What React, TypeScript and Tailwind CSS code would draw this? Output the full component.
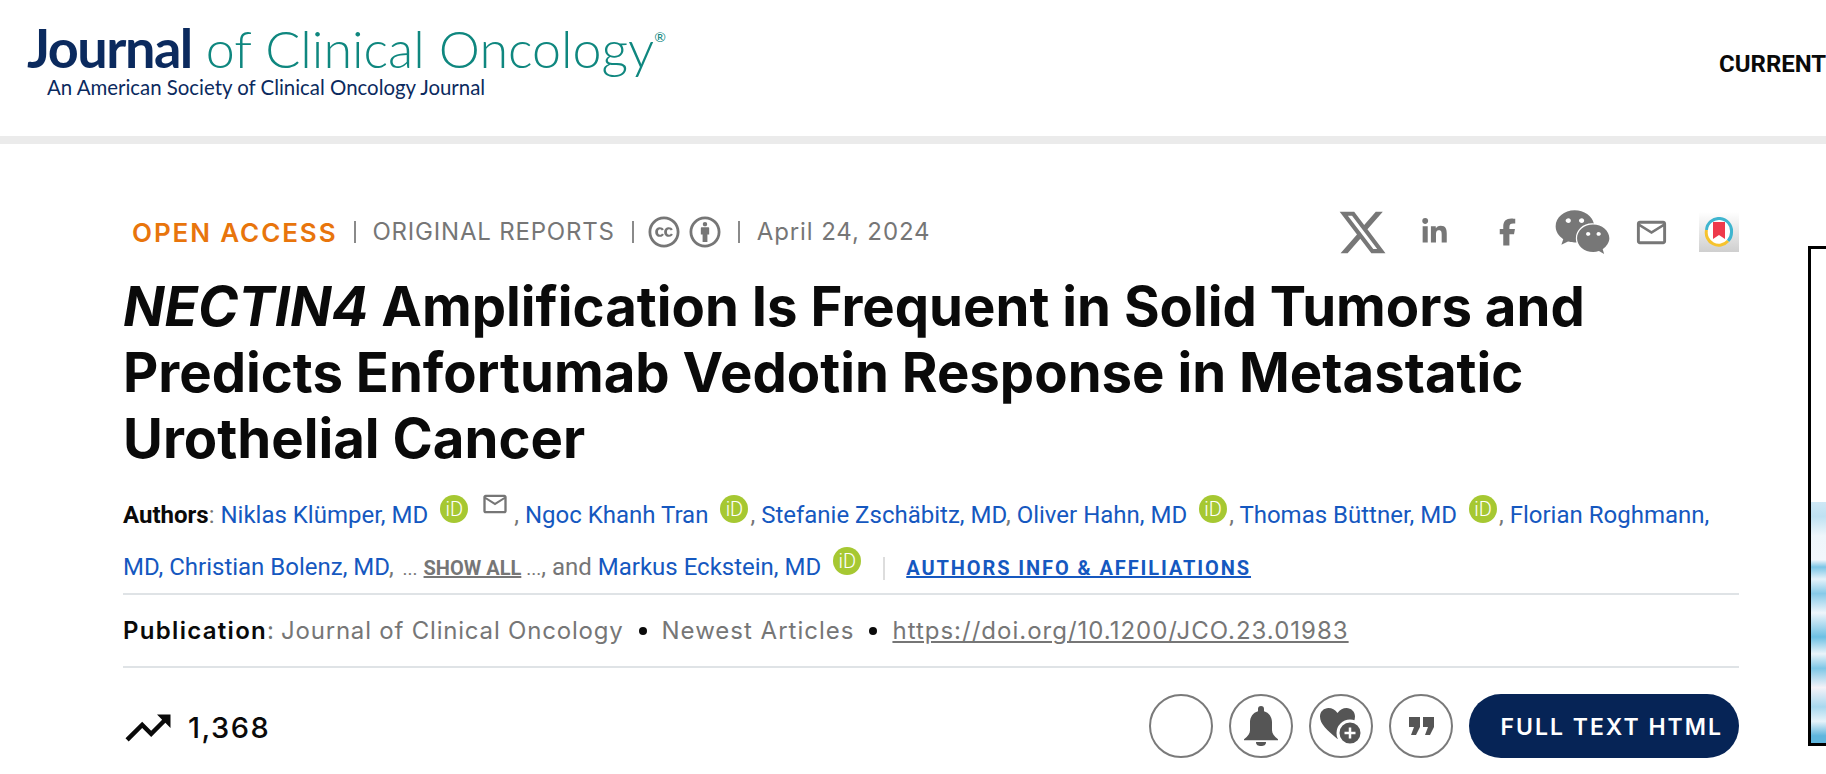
import React from 'react';
import { FaXTwitter, FaLinkedinIn, FaFacebookF, FaWeixin, FaCreativeCommons, FaCreativeCommonsBy } from 'react-icons/fa6';
import { MdTrendingUp, MdOutlineEmail } from 'react-icons/md';

const OrcidBadge = () => (
  <span className="inline-flex w-[28px] h-[28px] ml-[12px] mr-[2px] rounded-full bg-[#a6c832] text-white items-center justify-center align-[7px] text-[20px] font-light leading-none">
    iD
  </span>
);

const Sep = () => <span className="block w-[2px] h-[22px] bg-[#8a8a8a]" />;

const AuthorLink = ({ children }: { children: React.ReactNode }) => (
  <a className="text-[#1558c0]">{children}</a>
);

const Bullet = () => <span className="block w-[8px] h-[8px] mx-[15px] rounded-full bg-[#0a0a0a]" />;

const BookmarkTile = () => (
  <div className="w-[40px] h-[40px] bg-gradient-to-b from-white to-[#cfcfcf] flex items-center justify-center">
    <svg width="30" height="30" viewBox="0 0 30 30">
      <circle cx="15" cy="15" r="12.500" fill="#ffffff" />
      <path d="M2.500 13A12.500 12.500 0 0 1 27.500 15 12.500 12.500 0 0 1 24 24" fill="none" stroke="#3fb5cf" strokeWidth="3" />
      <path d="M2.500 13A12.500 12.500 0 0 0 24 24" fill="none" stroke="#f6c32e" strokeWidth="3" />
      <path d="M9 5h12v17l-6-4-6 4z" fill="#ee3a4c" />
    </svg>
  </div>
);

const CircleButton = ({ children }: { children?: React.ReactNode }) => (
  <button className="w-[64px] h-[64px] rounded-full border-2 border-[#7a7a7a] flex items-center justify-center text-[#555555]">
    {children}
  </button>
);

const BellIcon = () => (
  <svg width="34" height="40" viewBox="0 0 34 40" fill="#555555">
    <path d="M17 0a3 3 0 0 1 3 3v2.200c5 1.300 8 6 8 11v8c0 3 2 6 6 9v1H0v-1c4-3 6-6 6-9v-8c0-5 3-9.700 8-11V3a3 3 0 0 1 3-3z" />
    <path d="M12 36h10c0 3-2 4-5 4s-5-1-5-4z" />
  </svg>
);

const HeartPlus = () => (
  <svg width="60" height="60" viewBox="0 0 60 60">
    <path d="M26.500 43C16 34 9 28 9 20.500 9 15.500 13 12 17.500 12c3.500 0 6.500 1.500 9 5 2.500-3.500 5.500-5 9-5 4.500 0 8.500 3.500 8.500 8.500 0 7.500-7 13.500-17.500 22.500z" fill="#555555" />
    <circle cx="39" cy="37" r="12" fill="#555555" stroke="#ffffff" strokeWidth="3" />
    <path d="M39 31.500v11M33.500 37h11" stroke="#ffffff" strokeWidth="2.500" />
  </svg>
);

const QuoteIcon = () => (
  <svg width="25" height="18" viewBox="0 0 25 18" fill="#555555">
    <path d="M0 0h11v10l-4 8H2l3-8H0z" />
    <path d="M14 0h11v10l-4 8h-5l3-8h-5z" />
  </svg>
);

export default function App() {
  return (
    <div className="w-[1826px] h-[774px] overflow-hidden bg-white font-['Inter',sans-serif]">
      <header className="h-[144px] border-b-[8px] border-[#ebebeb] flex">
        <div className="pl-[27px] pt-[18px]">
          <div className="font-['Lato',sans-serif] text-[54px] leading-[60px] whitespace-nowrap">
            <span className="font-bold text-[#0b2a5e] tracking-[-1.5px]">Journal</span>
            <span className="font-light text-[52px] text-[#0f877f] ml-[14px]">of Clinical Oncology</span>
            <sup className="text-[14px] text-[#0f877f] top-[-26px]">®</sup>
          </div>
          <div className="font-['Lato',sans-serif] text-[20.400px] leading-[24px] text-[#0b2a5e] ml-[20px] -mt-[3px] whitespace-nowrap">
            An American Society of Clinical Oncology Journal
          </div>
        </div>
        <nav className="ml-auto w-[107px] overflow-hidden pt-[49px]">
          <span className="font-['Roboto',sans-serif] font-bold text-[24px] leading-[30px] text-[#0a0a0a] whitespace-nowrap">
            CURRENT
          </span>
        </nav>
      </header>

      <div className="flex pl-[123px]">
        <main className="w-[1616px] shrink-0 pt-[66px]">
          <div className="flex items-center justify-between h-[44px] pl-[9px]">
            <div className="flex items-center text-[24px] tracking-[0.800px] text-[#767676]">
              <span className="font-semibold text-[26px] tracking-[1.900px] text-[#e8750c]">OPEN ACCESS</span>
              <span className="ml-[17px]"><Sep /></span>
              <span className="ml-[16px]">ORIGINAL REPORTS</span>
              <span className="ml-[17px]"><Sep /></span>
              <FaCreativeCommons className="ml-[14px] w-[32px] h-[32px]" />
              <FaCreativeCommonsBy className="ml-[9px] w-[32px] h-[32px]" />
              <span className="ml-[17px]"><Sep /></span>
              <span className="ml-[17px] tracking-[0.900px]">April 24, 2024</span>
            </div>
            <div className="flex items-center text-[#777777]">
              <FaXTwitter className="w-[51px] h-[51px]" />
              <FaLinkedinIn className="ml-[33px] w-[27px] h-[28px]" />
              <FaFacebookF className="ml-[51px] w-[17px] h-[30px]" />
              <FaWeixin className="ml-[38px] w-[57px] h-[50px]" />
              <MdOutlineEmail className="ml-[23px] w-[35px] h-[35px]" />
              <div className="ml-[30px]"><BookmarkTile /></div>
            </div>
          </div>

          <h1 className="mt-[19px] text-[54.500px] leading-[66px] font-bold text-[#0a0a0a] whitespace-nowrap">
            <em>NECTIN4</em> Amplification Is Frequent in Solid Tumors and
            <br />
            Predicts Enfortumab Vedotin Response in Metastatic
            <br />
            Urothelial Cancer
          </h1>

          <div className="mt-[18px] h-[104px] font-['Roboto',sans-serif] text-[24px] leading-[52px] text-[#767676] whitespace-nowrap">
            <b className="font-bold text-[#0a0a0a]">Authors</b>: <AuthorLink>Niklas Klümper, MD</AuthorLink>
            <OrcidBadge />
            <MdOutlineEmail className="inline-block w-[28px] h-[28px] ml-[11px] mr-[5px] align-[5px] text-[#767676]" />
            , <AuthorLink>Ngoc Khanh Tran</AuthorLink>
            <OrcidBadge />, <AuthorLink>Stefanie Zschäbitz, MD</AuthorLink>, <AuthorLink>Oliver Hahn, MD</AuthorLink>
            <OrcidBadge />, <AuthorLink>Thomas Büttner, MD</AuthorLink>
            <OrcidBadge />, <AuthorLink>Florian Roghmann,</AuthorLink>
            <br />
            <AuthorLink>MD, Christian Bolenz, MD</AuthorLink>, <span className="text-[19px] ml-[3px]">...</span> <a className="font-bold text-[20px] underline -mr-[1px]">SHOW ALL</a> <span className="text-[19px]">...</span>, and <AuthorLink>Markus Eckstein, MD</AuthorLink>
            <OrcidBadge />
            <span className="inline-block w-[2px] h-[23px] bg-[#dddddd] ml-[20px] mr-[21px] align-[-5px]" />
            <a className="font-bold text-[20px] tracking-[1.900px] underline text-[#1558c0]">AUTHORS INFO &amp; AFFILIATIONS</a>
          </div>

          <div className="h-[75px] border-y-2 border-[#dfe3e6] flex items-center text-[24px] tracking-[1px] text-[#767676]">
            <b className="font-semibold tracking-[1.300px] text-[#0a0a0a]">Publication</b>:
            <span className="ml-[6px] tracking-[0.800px]">Journal of Clinical Oncology</span>
            <Bullet />
            <span>Newest Articles</span>
            <Bullet />
            <a className="underline">https://doi.org/10.1200/JCO.23.01983</a>
          </div>

          <div className="mt-[26px] flex items-center justify-between">
            <div className="flex items-center pt-[3px] text-[29px] tracking-[1.500px] font-medium text-[#0a0a0a]">
              <MdTrendingUp className="w-[54px] h-[54px] -ml-[2px]" />
              <span className="ml-[13px]">1,368</span>
            </div>
            <div className="flex items-center gap-[16px]">
              <CircleButton />
              <CircleButton><BellIcon /></CircleButton>
              <CircleButton><HeartPlus /></CircleButton>
              <CircleButton><QuoteIcon /></CircleButton>
              <button className="w-[270px] h-[64px] rounded-full bg-[#062456] text-white text-[23px] font-semibold tracking-[2px] flex items-center justify-end pr-[16px] pt-[2px]">
                FULL TEXT HTML
              </button>
            </div>
          </div>
        </main>

        <aside className="ml-[69px] mt-[102px] w-[40px] h-[500px] shrink-0 border-[3px] border-r-0 border-black">
          <div className="h-[253px] bg-white" />
          <div className="h-[241px] bg-[linear-gradient(to_bottom,#cfe8f5_0%,#bfe1f2_6%,#eef6fb_14%,#f2f7fc_24%,#7cc6e6_27%,#e4f2fa_32%,#86cae8_38%,#eef5fb_46%,#6dc0e3_56%,#eaf4fa_63%,#7ec7e6_69%,#f4f2f8_77%,#a8d8ee_85%,#e6f3fa_91%,#5fb6dd_97%)]" />
        </aside>
      </div>
    </div>
  );
}
